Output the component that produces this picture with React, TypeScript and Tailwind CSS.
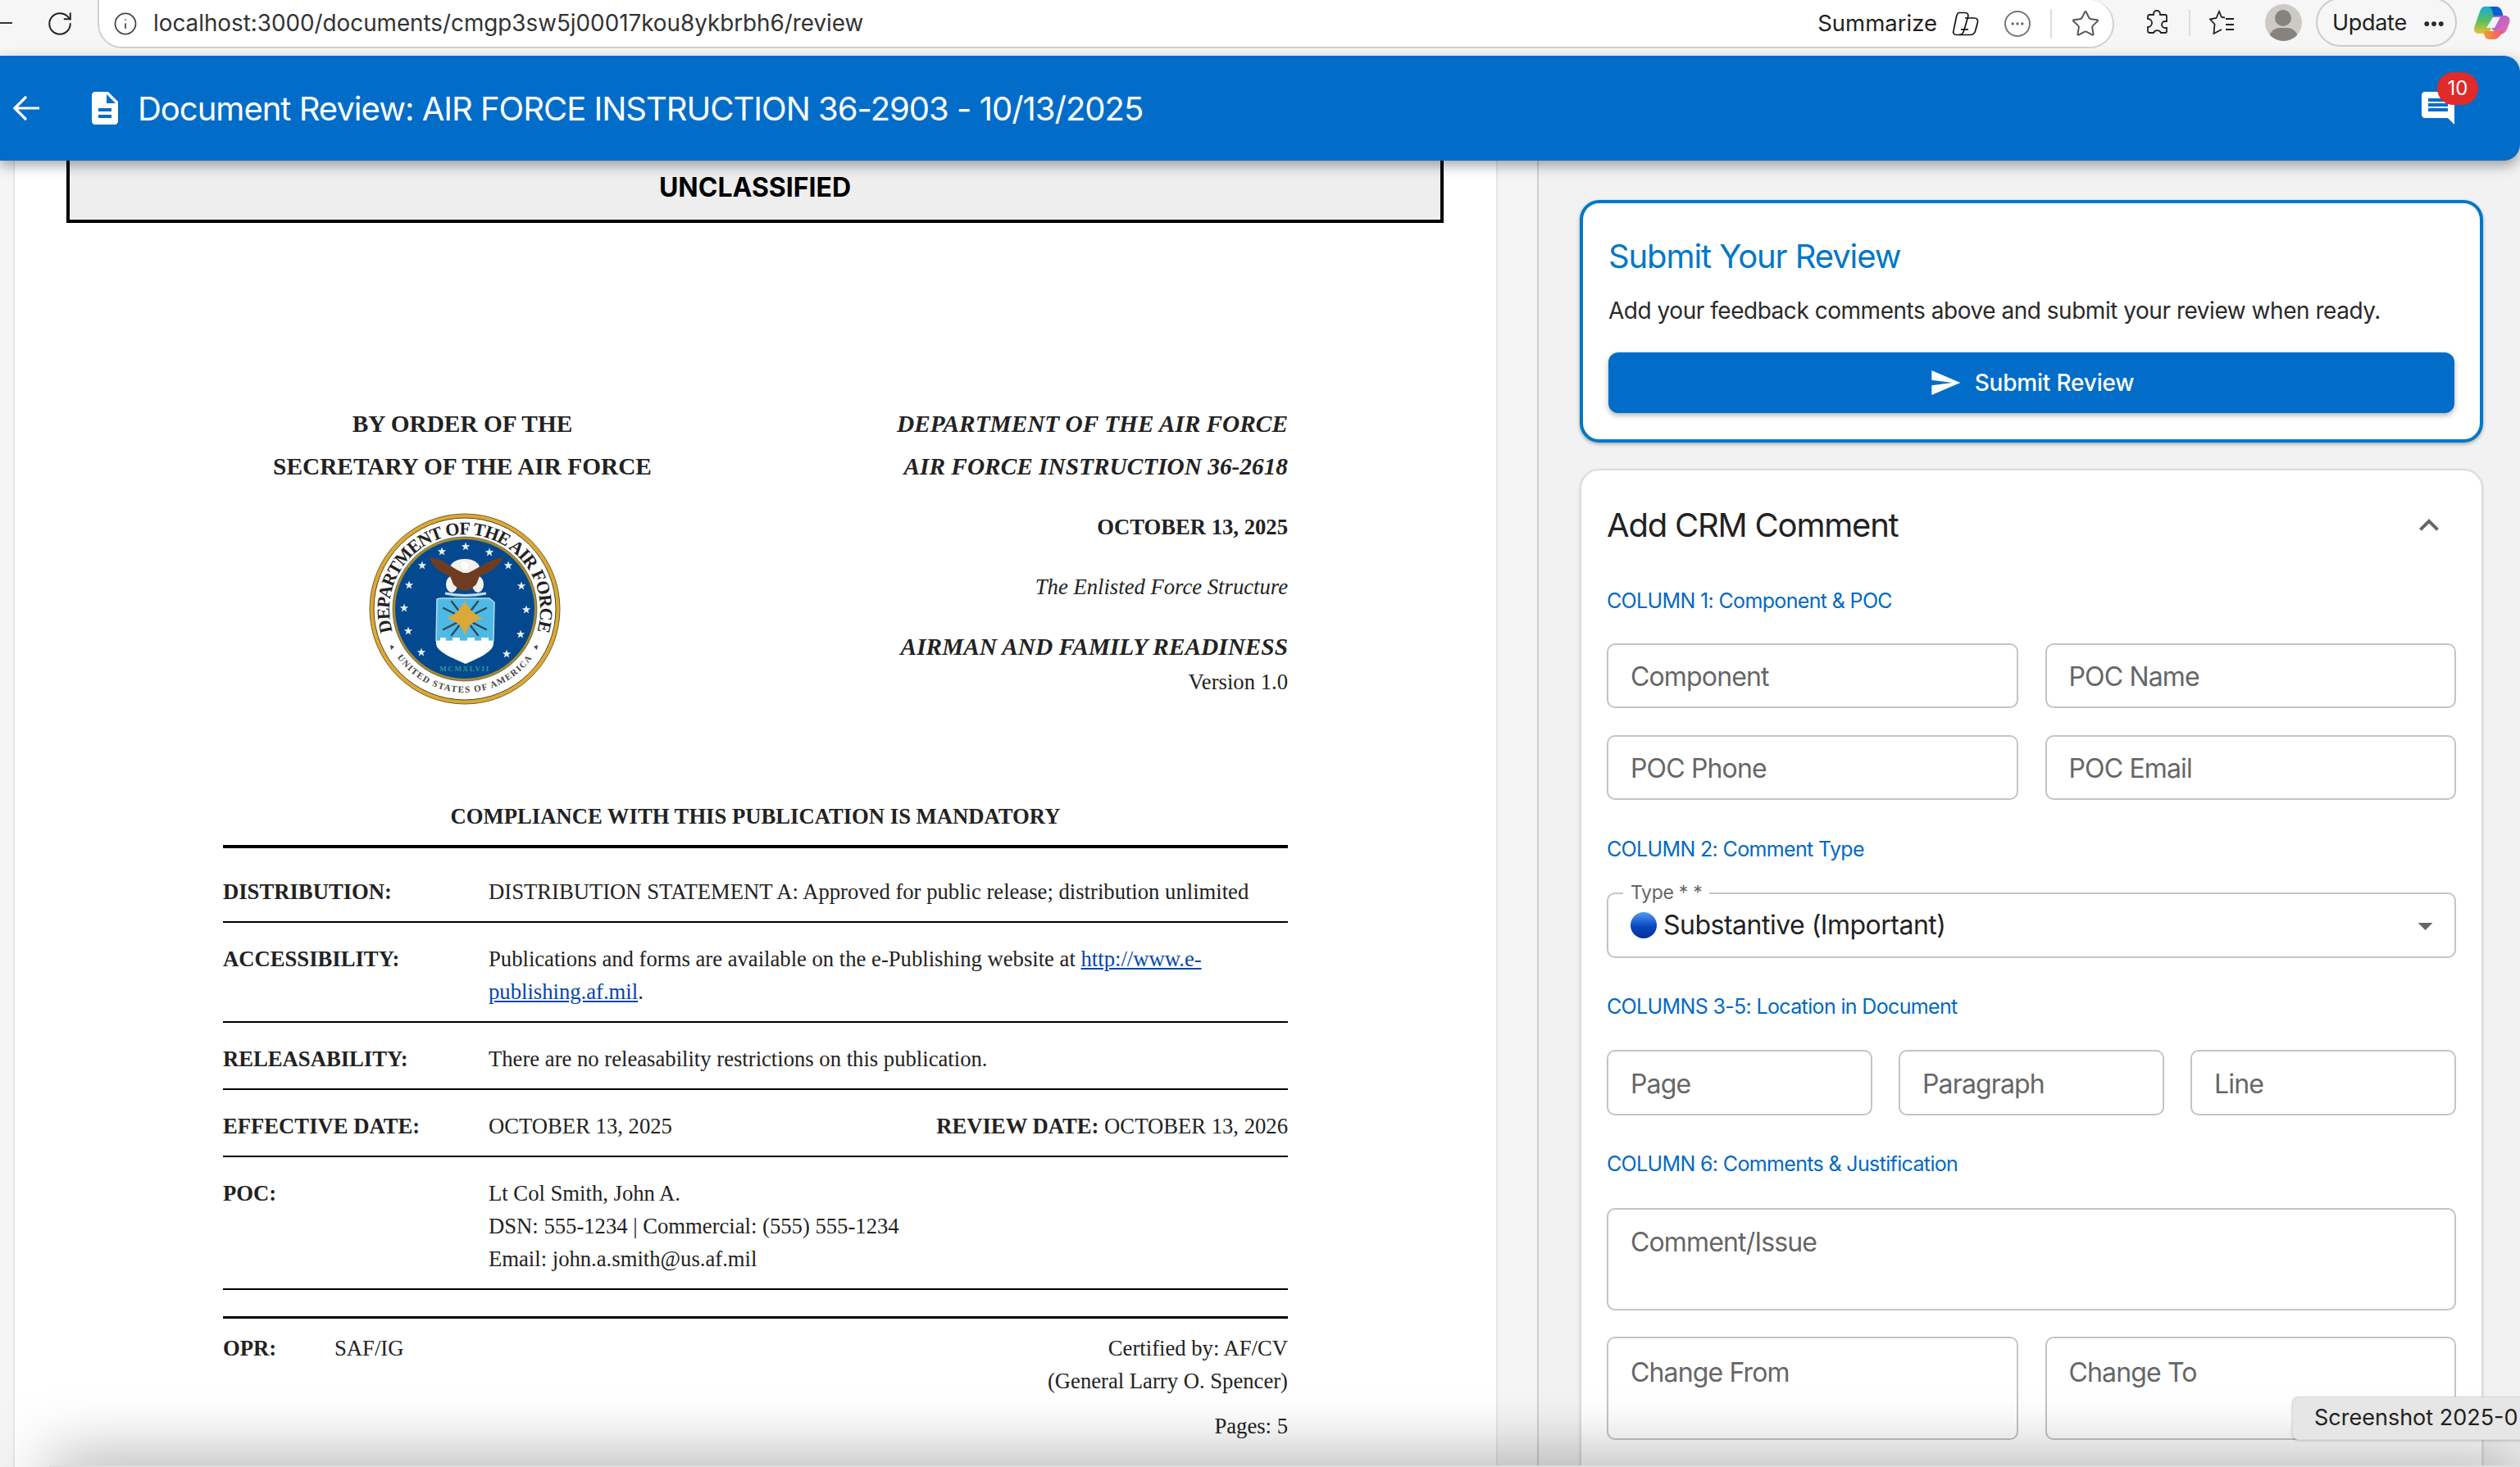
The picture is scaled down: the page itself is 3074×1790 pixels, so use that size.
import React from "react";
import { Info, RotateCw, Star, Ellipsis } from "lucide-react";

const Seal = () => {
  const stars = [
    [1, -76], [30, -69], [53, -53], [69, -28], [75, 1], [68, 31], [51, 55],
    [-53, 53], [-69, 27], [-74, -1], [-68, -29], [-52, -53], [-28, -70],
  ];
  return (
    <svg viewBox="-118 -118 236 236" className="ml-[5px] h-[236px] w-[236px]">
      <circle r="116" fill="#d9a93a" stroke="#7a5f1c" strokeWidth="1" />
      <circle r="111" fill="#fff" stroke="#5a4712" strokeWidth="1" />
      <circle r="88" fill="#a98b2f" stroke="#3a3a20" strokeWidth="0.6" />
      <circle r="85" fill="#04498f" />
      <defs>
        <path id="sealTop" d="M -88 28 A 92 92 0 1 1 88 28" />
        <path id="sealBottom" d="M -84 57 A 101 101 0 0 0 84 57" />
      </defs>
      <text fontFamily="'Liberation Serif', serif" fontSize="22" fill="#222">
        <textPath href="#sealTop" startOffset="50%" textAnchor="middle" textLength="342" lengthAdjust="spacing">
          DEPARTMENT OF THE AIR FORCE
        </textPath>
      </text>
      <text fontFamily="'Liberation Serif', serif" fontSize="11" fontWeight="700" fill="#444" letterSpacing="1.4">
        <textPath href="#sealBottom" startOffset="50%" textAnchor="middle">
          UNITED STATES OF AMERICA
        </textPath>
      </text>
      <polygon points="-91,44 -86,46 -90,50" fill="#444" />
      <polygon points="89,44 84,46 88,50" fill="#444" />
      {stars.map(([x, y], i) => (
        <polygon
          key={i}
          transform={`translate(${x} ${y}) scale(5.5)`}
          fill="#e4f2fa"
          points="0,-1 0.24,-0.31 0.95,-0.31 0.38,0.12 0.59,0.81 0,0.4 -0.59,0.81 -0.38,0.12 -0.95,-0.31 -0.24,-0.31"
        />
      ))}
      {/* eagle */}
      <ellipse cx="0" cy="-50" rx="18" ry="11" fill="#f4f2ee" />
      <ellipse cx="-16" cy="-30" rx="7" ry="10" fill="#f4f2ee" />
      <ellipse cx="16" cy="-30" rx="7" ry="10" fill="#f4f2ee" />
      <path d="M-43 -63 C-30 -62 -20 -54 -10 -48 L-2 -44 L4 -44 L12 -48 C22 -54 32 -60 47 -63 C42 -52 30 -44 18 -40 L14 -30 L6 -23 L0 -22 L-6 -23 L-14 -30 L-18 -40 C-30 -44 -40 -52 -43 -63 Z" fill="#6f3c22" />
      <circle cx="0" cy="-53" r="4.5" fill="#fff" />
      <path d="M-24 -19 Q0 -14 26 -19" stroke="#bfe0f0" strokeWidth="3" fill="none" />
      {/* shield */}
      <path d="M-34 -12 L-30 -13 H30 L36 -8 L35 39 H-35 Z" fill="#4fb9e6" stroke="#b8d8e4" strokeWidth="1.5" />
      <path d="M-35 39 L-35 42 C-35 52 -15 60 1 67 C17 60 35 52 35 42 V39 L29 39 V35 H20 V39 H12 V35 H3 V39 H-6 V35 H-15 V39 H-23 V35 H-30 V39 Z" fill="#fff" />
      <g stroke="#2f4a55" strokeWidth="2.4" strokeLinecap="round">
        <path d="M-26 -1 L26 25" />
        <path d="M26 -1 L-26 25" />
        <path d="M-16 -9 L16 32" />
        <path d="M16 -9 L-16 32" />
      </g>
      <path d="M-22 12 Q-6 4 0 -10 Q6 4 22 12 Q6 14 0 32 Q-6 14 -22 12 Z" fill="#d9a93a" />
      <text y="76" textAnchor="middle" fontFamily="'Liberation Serif', serif" fontSize="9" letterSpacing="1.6" fill="#2f9a90">
        MCMXLVII
      </text>
    </svg>
  );
};

const Field = ({ label, className }: { label: string; className?: string }) => (
  <div className={`rounded-[10px] border-2 border-[#c4c4c4] bg-white px-[27px] text-[32px] tracking-[-0.85px] text-[#666] ${className ?? ""}`}>
    {label}
  </div>
);

const Section = ({ children, className }: { children: React.ReactNode; className?: string }) => (
  <h5 className={`h-[36px] text-[25px] leading-[36px] tracking-[-0.65px] text-[#0169c3] ${className ?? ""}`}>{children}</h5>
);

const DocRow = ({ label, children }: { label: string; children: React.ReactNode }) => (
  <div className="flex border-b-2 border-black pt-[24px] pb-[16px]">
    <div className="w-[324px] shrink-0 font-bold">{label}</div>
    <div className="flex-1">{children}</div>
  </div>
);

export default function App() {
  return (
    <div className="relative h-[1790px] w-[3074px] overflow-hidden bg-[#f2f2f2] font-['Inter',sans-serif]">
      {/* browser toolbar */}
      <div className="flex h-[68px] bg-[#f6f6f6] text-[#222]">
        <div className="mt-[27px] h-[2px] w-[15px] bg-[#333]" />
        <RotateCw className="ml-[41px] mt-[12px] h-[34px] w-[34px]" strokeWidth={1.4} />
        <div className="ml-[29px] flex h-[59px] w-[2460px] items-center rounded-b-[30px] rounded-tr-[30px] border-x-2 border-b-2 border-[#d0d0d0] bg-white pl-[17px]">
          <Info className="h-[30px] w-[30px] text-[#444]" strokeWidth={1.4} />
          <span className="ml-[19px] text-[27.8px] text-[#333]">localhost:3000/documents/cmgp3sw5j00017kou8ykbrbh6/review</span>
          <span className="ml-auto text-[27.5px] text-[#222]">Summarize</span>
          <svg viewBox="0 0 33 30" className="ml-[18px] h-[30px] w-[33px]" fill="none" stroke="#111" strokeWidth="1.7">
            <path d="M9 1.500h7c3.500 0 4.500 2.500 3.500 5.500l-5 17c-1 3-3 4.500-6 4.500H5.500C2.500 28.500 1 26.500 2 23.500l3.500-17C6 4 7 1.500 9 1.500Z" />
            <path d="M16 8h11c3.500 0 5 2 4.500 5l-3 11c-1 3-3 4.500-6 4.500H9" />
            <path d="M11 22h9" />
          </svg>
          <div className="ml-[31px] flex h-[32px] w-[32px] items-center justify-center rounded-full border-2 border-[#777]">
            <Ellipsis className="h-[20px] w-[20px] text-[#666]" />
          </div>
          <div className="ml-[24px] h-[36px] w-[2px] bg-[#ddd]" />
          <Star className="ml-[23px] h-[36px] w-[36px] text-[#555]" strokeWidth={1.3} />
          <div className="w-[15px]" />
        </div>
        <svg viewBox="0 0 28 32" className="ml-[38px] mt-[12px] h-[32px] w-[28px]" fill="none" stroke="#222" strokeWidth="1.8">
          <path d="M10 5a4 4 0 1 1 8 0v1h6a2 2 0 0 1 2 2v6h-2a4 4 0 0 0 0 8h2v4a2 2 0 0 1-2 2h-5a5 5 0 0 0-9 0H5a2 2 0 0 1-2-2v-5a5 5 0 0 0 0-10V8a2 2 0 0 1 2-2h5Z" />
        </svg>
        <div className="ml-[25px] mt-[12px] h-[32px] w-[2px] bg-[#ddd]" />
        <svg viewBox="0 0 32 32" className="ml-[23px] mt-[12px] h-[32px] w-[32px]" fill="none" stroke="#222" strokeWidth="1.8">
          <path d="M19 9.500 15 9 12 2 8.500 10 1 11.500l5.500 6L5.500 29l9.500-5" />
          <path d="M20 11h10M20 18h10M20 24h10" />
        </svg>
        <div className="relative ml-[36px] mt-[5px] h-[45px] w-[45px] overflow-hidden rounded-full bg-[#cdcac6]">
          <div className="absolute left-[12px] top-[7px] h-[20px] w-[20px] rounded-full bg-[#86827d]" />
          <div className="absolute left-[5px] top-[29px] h-[26px] w-[35px] rounded-full bg-[#86827d]" />
        </div>
        <div className="ml-[17px] mt-[-3px] flex h-[60px] w-[172px] items-center rounded-[30px] border-2 border-[#ccc] pl-[18px] pt-[3px] text-[27px] tracking-[-0.3px]">
          Update
          <Ellipsis className="ml-[18px] h-[30px] w-[30px] text-[#222]" strokeWidth={2.6} />
        </div>
        <svg viewBox="0 0 44 40" className="ml-[21px] mt-[8px] h-[40px] w-[44px]">
          <defs>
            <linearGradient id="cpL" x1="0" y1="0" x2="0" y2="1">
              <stop offset="0" stopColor="#18a8e0" />
              <stop offset="0.55" stopColor="#5cc05a" />
              <stop offset="1" stopColor="#ecc22e" />
            </linearGradient>
            <linearGradient id="cpR" x1="0" y1="0" x2="1" y2="1">
              <stop offset="0" stopColor="#9a5ce0" />
              <stop offset="1" stopColor="#f070a0" />
            </linearGradient>
            <linearGradient id="cpB" x1="0" y1="0" x2="1" y2="0">
              <stop offset="0" stopColor="#f0a030" />
              <stop offset="1" stopColor="#f0507a" />
            </linearGradient>
          </defs>
          <path d="M13 0h10c4 0 5 3 4 7l-6 19c-1 4-4 7-8 7H6c-4 0-7-3-6-7L7 6c1-3 3-6 6-6Z" fill="url(#cpL)" />
          <path d="M18 0h9c4 0 6 3 7 6l2 7H24L22 5c-1-3-2-5-4-5Z" fill="#0a5fd0" />
          <path d="M24 11h13c5 0 8 4 6 9l-3 8c-2 4-5 6-9 6l-9-6Z" fill="url(#cpR)" />
          <path d="M12 30h18c2 0 5-1 6-2l-4 7c-2 3-5 5-8 5h-6c-3 0-5-3-6-6Z" fill="url(#cpB)" />
          <path d="M23 13h9l-7 13H15Z" fill="#f4f2fa" />
        </svg>
      </div>

      {/* app bar */}
      <header className="relative z-10 flex h-[128px] items-center rounded-r-[20px] bg-[#016dc8] text-white shadow-[0_6px_16px_rgba(0,0,0,0.35)]">
        <svg viewBox="0 0 24 24" className="ml-[8px] h-[48px] w-[48px]" fill="none" stroke="#fff" strokeWidth="1.6">
          <path d="M20 12H5M12 5l-7 7 7 7" />
        </svg>
        <svg viewBox="0 0 24 24" className="ml-[48px] h-[48px] w-[48px]" fill="#fff">
          <path d="M14 2H6c-1.100 0-1.990.9-1.990 2L4 20c0 1.100.89 2 1.990 2H18c1.100 0 2-.9 2-2V8l-6-6zm2 16H8v-2h8v2zm0-4H8v-2h8v2zm-3-5V3.500L18.500 9H13z" />
        </svg>
        <h1 className="ml-[16px] mt-[2px] text-[40px] font-normal tracking-[-1px]">Document Review: AIR FORCE INSTRUCTION 36-2903 - 10/13/2025</h1>
        <div className="relative ml-auto mr-[76px] h-[48px] w-[48px]">
          <svg viewBox="0 0 24 24" className="h-[48px] w-[48px]" fill="#fff">
            <path d="M21.990 4c0-1.100-.89-2-1.990-2H4c-1.100 0-2 .9-2 2v12c0 1.100.9 2 2 2h14l4 4-.01-18zM18 14H6v-2h12v2zm0-3H6V9h12v2zm0-3H6V6h12v2z" />
          </svg>
          <span className="absolute left-[23px] top-[-20px] flex h-[40px] w-[50px] items-center justify-center rounded-full bg-[#e12a2a] text-[24px]">
            10
          </span>
        </div>
      </header>

      <main className="flex h-[1594px]">
        {/* document */}
        <section className="flex w-[1877px] shrink-0 border-r-2 border-[#cfcfcf] bg-[#f5f5f5]">
          <div className="ml-[16px] w-[1811px] border-x-2 border-[#e6e6e6] bg-white font-['Liberation_Serif',serif] text-[26.67px] leading-[40px] text-[#222]">
            <div className="ml-[63px] flex h-[76px] w-[1680px] items-center justify-center border-x-4 border-b-4 border-black bg-[#eeeeee] pb-[6px] font-['Inter',sans-serif] text-[32px] font-bold text-black">
              UNCLASSIFIED
            </div>
            <div className="mx-auto w-[1299px]">
              <div className="mt-[219px] flex justify-between">
                <div className="flex w-[584px] flex-col items-center font-bold">
                  <div className="h-[52px] text-[29.33px] leading-[52px]">BY ORDER OF THE</div>
                  <div className="h-[52px] text-[29.33px] leading-[52px]">SECRETARY OF THE AIR FORCE</div>
                  <div className="mt-[30px]">
                    <Seal />
                  </div>
                </div>
                <div className="text-right">
                  <div className="h-[52px] text-[29.33px] font-bold italic leading-[52px]">DEPARTMENT OF THE AIR FORCE</div>
                  <div className="h-[52px] text-[29.33px] font-bold italic leading-[52px]">AIR FORCE INSTRUCTION 36-2618</div>
                  <div className="mt-[28px] font-bold">OCTOBER 13, 2025</div>
                  <div className="mt-[33px] italic">The Enlisted Force Structure</div>
                  <div className="mt-[33px] text-[29.33px] font-bold italic">AIRMAN AND FAMILY READINESS</div>
                  <div className="mt-[3px]">Version 1.0</div>
                </div>
              </div>

              <div className="mt-[115px] border-b-4 border-black pb-[15px] text-center font-bold">
                COMPLIANCE WITH THIS PUBLICATION IS MANDATORY
              </div>
              <div className="flex border-b-2 border-black pt-[33px] pb-[16px]">
                <div className="w-[324px] shrink-0 font-bold">DISTRIBUTION:</div>
                <div>DISTRIBUTION STATEMENT A: Approved for public release; distribution unlimited</div>
              </div>
              <DocRow label="ACCESSIBILITY:">
                Publications and forms are available on the e-Publishing website at{" "}
                <a href="#" className="text-[#0645ad] underline">http://www.e-</a>
                <br />
                <a href="#" className="text-[#0645ad] underline">publishing.af.mil</a>.
              </DocRow>
              <DocRow label="RELEASABILITY:">There are no releasability restrictions on this publication.</DocRow>
              <DocRow label="EFFECTIVE DATE:">
                <div className="flex justify-between">
                  <span>OCTOBER 13, 2025</span>
                  <span>
                    <b>REVIEW DATE:</b> OCTOBER 13, 2026
                  </span>
                </div>
              </DocRow>
              <DocRow label="POC:">
                Lt Col Smith, John A.
                <br />
                DSN: 555-1234 | Commercial: (555) 555-1234
                <br />
                Email: john.a.smith@us.af.mil
              </DocRow>
              <div className="mt-[32px] flex border-t-[3px] border-black pt-[16px]">
                <div className="w-[136px] shrink-0 font-bold">OPR:</div>
                <div>SAF/IG</div>
                <div className="ml-auto text-right">
                  Certified by: AF/CV
                  <br />
                  (General Larry O. Spencer)
                  <div className="mt-[15px]">Pages: 5</div>
                </div>
              </div>
            </div>
          </div>
        </section>

        {/* review sidebar */}
        <aside className="ml-[50px] w-[1102px] pt-[48px]">
          <div className="h-[296px] rounded-[24px] border-4 border-[#0277c8] bg-white px-[31px] pt-[40px] shadow-[0_2px_4px_rgba(0,0,0,0.3)]">
            <h2 className="text-[40px] font-normal leading-[50px] tracking-[-1.1px] text-[#0277c8]">Submit Your Review</h2>
            <p className="mt-[22px] text-[28px] leading-[38px] tracking-[-0.47px] text-[#2a2a2a]">
              Add your feedback comments above and submit your review when ready.
            </p>
            <button className="mt-[32px] flex h-[74px] w-full items-center justify-center rounded-[12px] bg-[#016dc8] text-[28px] font-medium tracking-[-0.2px] text-white shadow-[0_3px_6px_rgba(0,0,0,0.3)]">
              <svg viewBox="0 0 24 24" className="mr-[16px] h-[40px] w-[40px]" fill="#fff">
                <path d="M2.010 21 23 12 2.010 3 2 10l15 2-15 2z" />
              </svg>
              Submit Review
            </button>
          </div>

          <div className="mt-[32px] h-[1300px] rounded-[24px] border-2 border-[#dcdcdc] bg-white px-[31px] shadow-[0_1px_3px_rgba(0,0,0,0.15)]">
            <div className="flex h-[134px] items-center justify-between">
              <h2 className="text-[40px] font-normal tracking-[-1.2px] text-[#222]">Add CRM Comment</h2>
              <svg viewBox="0 0 24 24" className="mr-[9px] h-[48px] w-[48px]" fill="#666">
                <path d="m12 8-6 6 1.410 1.410L12 10.830l4.590 4.580L18 14z" />
              </svg>
            </div>
            <Section className="mt-[7px]">COLUMN 1: Component &amp; POC</Section>
            <div className="mt-[34px] grid grid-cols-2 gap-x-[33px] gap-y-[33px]">
              <Field label="Component" className="flex h-[79px] items-center pt-[3px]" />
              <Field label="POC Name" className="flex h-[79px] items-center pt-[3px]" />
              <Field label="POC Phone" className="flex h-[79px] items-center pt-[3px]" />
              <Field label="POC Email" className="flex h-[79px] items-center pt-[3px]" />
            </div>
            <Section className="mt-[42px]">COLUMN 2: Comment Type</Section>
            <div className="relative mt-[35px] flex h-[80px] items-center rounded-[10px] border-2 border-[#c4c4c4] pl-[27px] text-[32px] tracking-[-0.5px] text-[#222]">
              <span className="absolute left-[18px] top-[-16px] bg-white px-[9px] text-[23px] leading-[28px] tracking-[-0.3px] text-[#666]">Type * *</span>
              <span className="h-[32px] w-[32px] rounded-full bg-[linear-gradient(#4f9cf0,#0a45c0_55%,#06308f)]" />
              <span className="ml-[8px]">Substantive (Important)</span>
              <svg viewBox="0 0 24 24" className="absolute right-[14px] h-[43px] w-[43px]" fill="#666">
                <path d="m7 10 5 5 5-5z" />
              </svg>
            </div>
            <Section className="mt-[41px]">COLUMNS 3-5: Location in Document</Section>
            <div className="mt-[35px] grid grid-cols-3 gap-x-[32px]">
              <Field label="Page" className="flex h-[80px] items-center pt-[3px]" />
              <Field label="Paragraph" className="flex h-[80px] items-center pt-[3px]" />
              <Field label="Line" className="flex h-[80px] items-center pt-[3px]" />
            </div>
            <Section className="mt-[41px]">COLUMN 6: Comments &amp; Justification</Section>
            <Field label="Comment/Issue" className="mt-[36px] h-[125px] pt-[16px]" />
            <div className="mt-[32px] grid grid-cols-2 gap-x-[33px]">
              <Field label="Change From" className="h-[126px] pt-[18px]" />
              <Field label="Change To" className="h-[126px] pt-[18px]" />
            </div>
          </div>
        </aside>
      </main>

      {/* dock shadow along the bottom of the capture */}
      <div className="absolute left-[60px] right-0 top-[1788px] z-20 h-[40px] bg-[#ddd] shadow-[0_0_80px_rgba(0,0,0,0.5)]" />

      {/* hover tooltip from the OS */}
      <svg viewBox="0 0 20 30" className="absolute left-[3056px] top-[1755px] z-30 h-[30px] w-[20px]" fill="#e3e3e3">
        <path d="M0 0h10l10 24V0Z" />
      </svg>
      <div className="absolute left-[2796px] top-[1704px] z-30 flex h-[53px] w-[300px] items-center whitespace-nowrap rounded-[8px] border border-[#d8d8d8] bg-[#e6e6e6] pl-[26px] text-[27px] text-[#222] shadow-[0_1px_3px_rgba(0,0,0,0.2)]">
        Screenshot 2025-0
      </div>
    </div>
  );
}
